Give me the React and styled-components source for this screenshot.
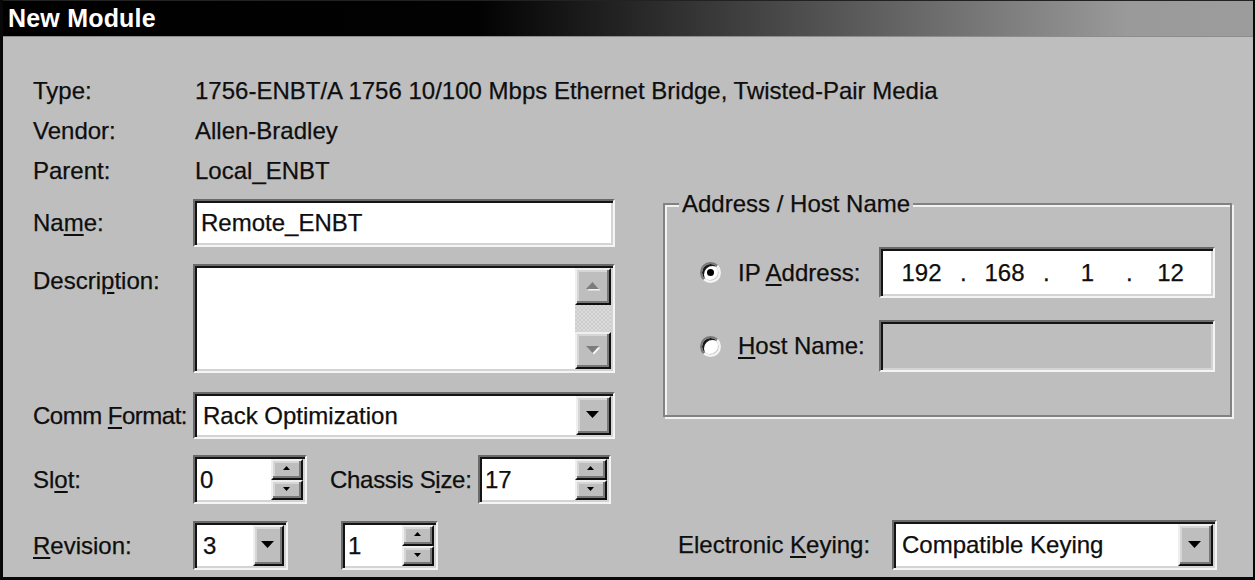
import React from 'react';
import styled, { createGlobalStyle } from 'styled-components';

const FACE = '#bebebe';

const Global = createGlobalStyle`
  *, *::before, *::after { box-sizing: border-box; }
  html, body { margin: 0; padding: 0; background: #000; }
  body { font-family: "Liberation Sans", Arial, sans-serif; }
`;

const Window = styled.div`
  width: 1255px;
  height: 580px;
  background: ${FACE};
  border-left: 3px solid #080808;
  border-right: 2px solid #080808;
  border-bottom: 3px solid #080808;
  display: flex;
  flex-direction: column;
  font-size: 24px;
  color: #0e0e0e;
  -webkit-text-stroke: 0.25px #0e0e0e;
  overflow: hidden;
`;

const TitleBar = styled.div`
  height: 37px;
  flex: none;
  display: flex;
  align-items: center;
  padding-left: 5px;
  background: linear-gradient(to right, #000 0%, #020202 38%, #9a9a9a 90%, #9c9c9c 100%);
  border-top: 1px solid #222;
  border-bottom: 1px solid #8c8c8c;
`;

const Title = styled.span`
  color: #fff;
  -webkit-text-stroke: 0;
  font-weight: bold;
  font-size: 25px;
  letter-spacing: 0.2px;
`;

const Body = styled.div`
  flex: 1;
  display: flex;
  flex-direction: column;
  padding: 34px 0 0 30px;
`;

const InfoRow = styled.div`
  display: grid;
  grid-template-columns: 162px auto;
  align-items: center;
  height: 40px;
  line-height: 28px;
  white-space: nowrap;
`;

const FormArea = styled.div`
  display: grid;
  grid-template-columns: 582px 569px;
  column-gap: 48px;
  margin-top: 8px;
`;

const LeftCol = styled.div`
  display: flex;
  flex-direction: column;
`;

const FieldRow = styled.div`
  display: grid;
  grid-template-columns: 160px 1fr;
  align-items: ${(p) => (p.$top ? 'start' : 'center')};
  height: ${(p) => p.$h}px;
  margin-top: ${(p) => p.$mt || 0}px;
`;

const InlineRow = styled.div`
  display: flex;
  align-items: center;
  height: 100%;
  gap: ${(p) => p.$gap || 0}px;
`;

const Label = styled.span`
  white-space: nowrap;
  line-height: 28px;
  flex: none;
  width: ${(p) => (p.$w ? `${p.$w}px` : 'auto')};
  padding-top: ${(p) => p.$pt || 0}px;
  margin-left: ${(p) => p.$ml || 0}px;
  letter-spacing: ${(p) => p.$ls || 0}px;
`;

const Key = styled.span`
  text-decoration: underline;
  text-decoration-thickness: 2px;
  text-underline-offset: 3px;
`;

const Sunken = styled.div`
  display: flex;
  align-items: stretch;
  height: 100%;
  width: ${(p) => (p.$w ? `${p.$w}px` : 'auto')};
  flex: none;
  margin-left: ${(p) => (p.$push ? 'auto' : '0')};
  background: ${(p) => (p.$disabled ? FACE : '#fff')};
  border: 2px solid;
  border-color: #6a6a6a #f4f4f4 #f4f4f4 #6a6a6a;
  box-shadow: inset 2px 2px 0 #141414, inset -2px -2px 0 #d4d4d4;
  padding: 2px;
`;

const FieldText = styled.div`
  flex: 1;
  display: flex;
  align-items: center;
  padding-left: ${(p) => p.$pl ?? 4}px;
  line-height: 28px;
  white-space: nowrap;
  overflow: hidden;
`;

const Btn = styled.div`
  width: ${(p) => p.$w}px;
  flex: ${(p) => (p.$grow ? 1 : 'none')};
  height: ${(p) => (p.$h ? `${p.$h}px` : 'auto')};
  background: ${FACE};
  border: 2px solid;
  border-color: #efefef #101010 #101010 #efefef;
  box-shadow: inset -2px -2px 0 #787878, inset 2px 2px 0 #d6d6d6;
  display: flex;
  align-items: center;
  justify-content: center;
`;

const SpinStack = styled.div`
  width: 32px;
  flex: none;
  display: flex;
  flex-direction: column;
`;

const ScrollBar = styled.div`
  width: 36px;
  flex: none;
  display: flex;
  flex-direction: column;
`;

const Track = styled.div`
  flex: 1;
  background-color: #d4d4d4;
  background-image: repeating-conic-gradient(#cdcdcd 0 25%, #dbdbdb 0 50%);
  background-size: 4px 4px;
`;

const RightCol = styled.div`
  display: flex;
  flex-direction: column;
`;

const GroupBox = styled.div`
  position: relative;
  margin-top: 4px;
  height: 214px;
  border: 2px solid #828282;
  box-shadow: inset 2px 2px 0 #f2f2f2, 2px 2px 0 #f2f2f2;
  padding: 42px 15px 0 35px;
  display: flex;
  flex-direction: column;
  gap: 22px;
`;

const Legend = styled.span`
  position: absolute;
  top: -15px;
  left: 14px;
  padding: 0 3px;
  background: ${FACE};
  line-height: 28px;
  white-space: nowrap;
`;

const GroupRow = styled.div`
  display: flex;
  align-items: center;
  height: ${(p) => p.$h}px;
`;

const Radio = styled.span`
  width: 21px;
  height: 21px;
  flex: none;
  border-radius: 50%;
  background: #fff;
  border: 2px solid;
  border-color: #777 #f4f4f4 #f4f4f4 #777;
  box-shadow: inset 2px 2px 0 #1a1a1a, inset -1px -1px 0 #cfcfcf;
  display: flex;
  align-items: center;
  justify-content: center;
  margin-right: 17px;

  &::after {
    content: '';
    width: 7px;
    height: 7px;
    border-radius: 50%;
    background: ${(p) => (p.$checked ? '#000' : 'transparent')};
  }
`;

const IpCell = styled.span`
  width: ${(p) => p.$w}px;
  flex: none;
  text-align: center;
  line-height: 28px;
`;

const KeyingRow = styled.div`
  margin-top: auto;
  height: 50px;
  display: flex;
  align-items: center;
  justify-content: space-between;
  padding-left: 15px;
  padding-right: 15px;
`;

const Arrow = ({ dir = 'down', w = 12, h = 7, color = '#000', shadow }) => {
  const pts = dir === 'down' ? `0,0 ${w},0 ${w / 2},${h}` : `0,${h} ${w},${h} ${w / 2},0`;
  return (
    <svg width={w + 2} height={h + 2} viewBox={`0 0 ${w + 2} ${h + 2}`}>
      {shadow && <polygon points={pts} fill="#f4f4f4" transform="translate(1.5,1.5)" />}
      <polygon points={pts} fill={color} />
    </svg>
  );
};

const Combo = ({ w, text, btnW = 35 }) => (
  <Sunken $w={w}>
    <FieldText $pl={6}>{text}</FieldText>
    <Btn $w={btnW}>
      <Arrow dir="down" w={13} h={7} />
    </Btn>
  </Sunken>
);

const Spinner = ({ w, value }) => (
  <Sunken $w={w}>
    <FieldText $pl={3}>{value}</FieldText>
    <SpinStack>
      <Btn $grow>
        <Arrow dir="up" w={7} h={4} />
      </Btn>
      <Btn $grow>
        <Arrow dir="down" w={7} h={4} />
      </Btn>
    </SpinStack>
  </Sunken>
);

const ipOctets = ['192', '168', '1', '12'];

export default function App() {
  return (
    <>
      <Global />
      <Window>
        <TitleBar>
          <Title>New Module</Title>
        </TitleBar>
        <Body>
          <InfoRow>
            <span>Type:</span>
            <span>1756-ENBT/A 1756 10/100 Mbps Ethernet Bridge, Twisted-Pair Media</span>
          </InfoRow>
          <InfoRow>
            <span>Vendor:</span>
            <span>Allen-Bradley</span>
          </InfoRow>
          <InfoRow>
            <span>Parent:</span>
            <span>Local_ENBT</span>
          </InfoRow>

          <FormArea>
            <LeftCol>
              <FieldRow $h={48}>
                <Label>
                  Na<Key>m</Key>e:
                </Label>
                <Sunken>
                  <FieldText>Remote_ENBT</FieldText>
                </Sunken>
              </FieldRow>

              <FieldRow $h={109} $mt={17} $top>
                <Label $pt={3}>
                  Descri<Key>p</Key>tion:
                </Label>
                <Sunken>
                  <FieldText />
                  <ScrollBar>
                    <Btn $h={37}>
                      <Arrow dir="up" w={13} h={7} color="#7c7c7c" shadow />
                    </Btn>
                    <Track />
                    <Btn $h={37}>
                      <Arrow dir="down" w={13} h={7} color="#7c7c7c" shadow />
                    </Btn>
                  </ScrollBar>
                </Sunken>
              </FieldRow>

              <FieldRow $h={47} $mt={19}>
                <Label $ls={-0.5}>
                  Comm <Key>F</Key>ormat:
                </Label>
                <Combo text="Rack Optimization" />
              </FieldRow>

              <FieldRow $h={49} $mt={16}>
                <Label>
                  Sl<Key>o</Key>t:
                </Label>
                <InlineRow>
                  <Spinner w={114} value="0" />
                  <Label $ml={23} $w={148} $ls={-0.3}>
                    Chassis S<Key>i</Key>ze:
                  </Label>
                  <Spinner w={133} value="17" />
                </InlineRow>
              </FieldRow>

              <FieldRow $h={49} $mt={17}>
                <Label>
                  <Key>R</Key>evision:
                </Label>
                <InlineRow $gap={53}>
                  <Combo w={95} text="3" btnW={31} />
                  <Spinner w={97} value="1" />
                </InlineRow>
              </FieldRow>
            </LeftCol>

            <RightCol>
              <GroupBox>
                <Legend>Address / Host Name</Legend>
                <GroupRow $h={51}>
                  <Radio $checked />
                  <Label>
                    IP <Key>A</Key>ddress:
                  </Label>
                  <Sunken $w={336} $push>
                    <FieldText $pl={0}>
                      {ipOctets.map((o, i) => (
                        <React.Fragment key={i}>
                          {i > 0 && <IpCell $w={6}>.</IpCell>}
                          <IpCell $w={77}>{o}</IpCell>
                        </React.Fragment>
                      ))}
                    </FieldText>
                  </Sunken>
                </GroupRow>
                <GroupRow $h={52}>
                  <Radio />
                  <Label>
                    <Key>H</Key>ost Name:
                  </Label>
                  <Sunken $w={336} $disabled $push>
                    <FieldText />
                  </Sunken>
                </GroupRow>
              </GroupBox>

              <KeyingRow>
                <Label>
                  Electronic <Key>K</Key>eying:
                </Label>
                <Combo w={325} text="Compatible Keying" />
              </KeyingRow>
            </RightCol>
          </FormArea>
        </Body>
      </Window>
    </>
  );
}
